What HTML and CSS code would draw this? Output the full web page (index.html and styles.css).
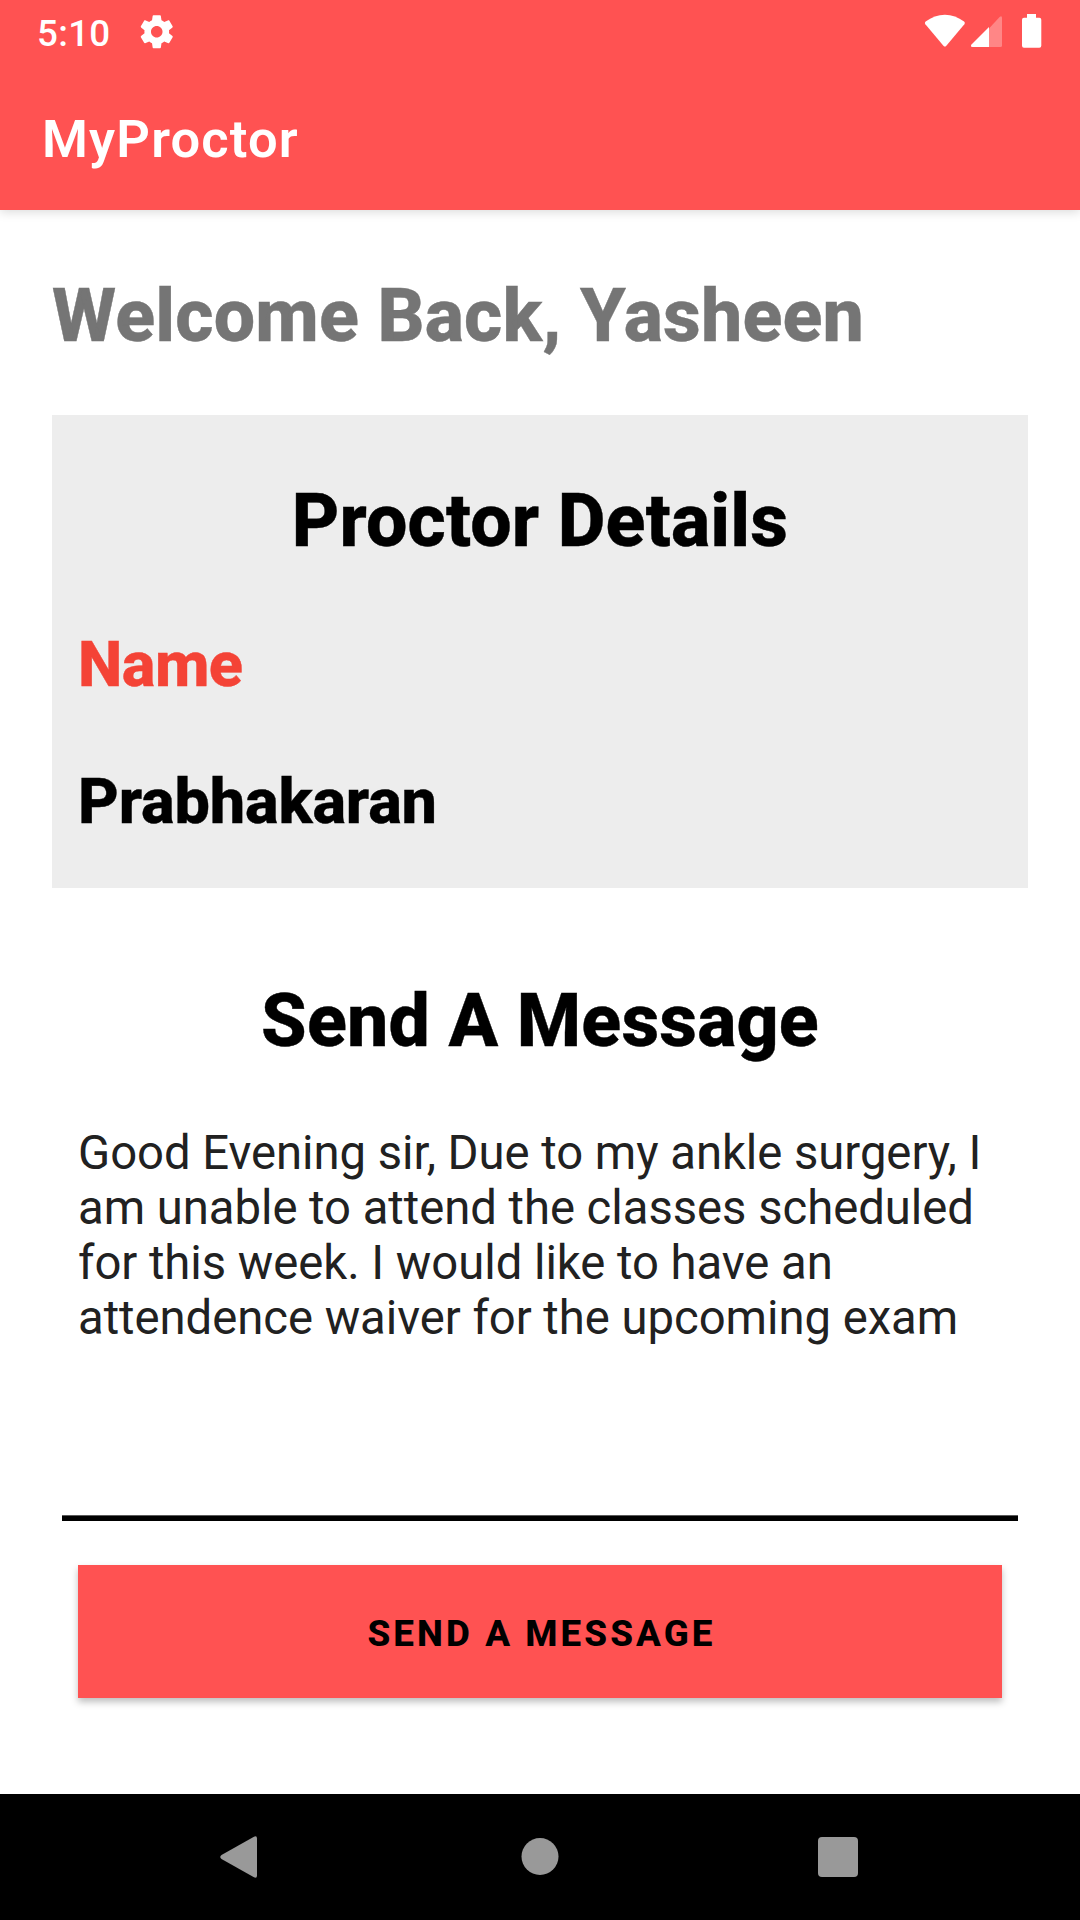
FILE: index.html
```html
<!DOCTYPE html>
<html lang="en">
<head>
<meta charset="utf-8">
<title>MyProctor</title>
<link rel="stylesheet" href="styles.css">
</head>
<body>
<div class="screen">
  <header class="top">
    <div class="status">
      <span class="clock">5:10</span>
      <svg class="gear" viewBox="0 0 24 24"><path d="M19.43 12.98c.04-.32.07-.64.07-.98s-.03-.66-.07-.98l2.11-1.65c.19-.15.24-.42.12-.64l-2-3.46c-.12-.22-.39-.3-.61-.22l-2.49 1c-.52-.4-1.08-.73-1.69-.98l-.38-2.65C14.46 2.18 14.25 2 14 2h-4c-.25 0-.46.18-.49.42l-.38 2.65c-.61.25-1.17.59-1.69.98l-2.49-1c-.23-.09-.49 0-.61.22l-2 3.46c-.13.22-.07.49.12.64l2.11 1.65c-.04.32-.07.65-.07.98s.03.66.07.98l-2.11 1.65c-.19.15-.24.42-.12.64l2 3.46c.12.22.39.3.61.22l2.49-1c.52.4 1.08.73 1.69.98l.38 2.65c.03.24.24.42.49.42h4c.25 0 .46-.18.49-.42l.38-2.65c.61-.25 1.17-.59 1.69-.98l2.49 1c.23.09.49 0 .61-.22l2-3.46c.12-.22.07-.49-.12-.64l-2.11-1.65zM12 15.5c-1.93 0-3.5-1.57-3.5-3.5s1.57-3.5 3.5-3.5 3.5 1.57 3.5 3.5-1.57 3.5-3.5 3.5z"/></svg>
      <svg class="indicators" viewBox="0 0 120 36">
        <path d="M0.9 10.2Q-0.2 8.8 1.2 7.6C13-1.6 29-1.6 40.800 7.6Q42.200 8.800 41.100 10.200L22.300 32Q21 33.200 19.700 32Z" transform="translate(.5 0) scale(.97 1)"/>
        <path class="dim" d="M65 14.500L75.600 2.900Q78 1 78 4V31.500Q78 33 76.500 33H65Z"/>
        <path d="M65 13V33H48.500Q46 33 47.500 30.500Z"/>
        <path d="M103 0h9v3.700h3.300q2 0 2 2V31.700q0 2-2 2H100q-2 0-2-2V5.700q0-2 2-2h3Z"/>
      </svg>
    </div>
    <h1 class="title">MyProctor</h1>
  </header>
  <main class="content">
    <h2 class="heading welcome">Welcome Back, Yasheen</h2>
    <section class="card">
      <h2 class="heading centered">Proctor Details</h2>
      <div class="detail label">Name</div>
      <div class="detail">Prabhakaran</div>
    </section>
    <h2 class="heading centered compose">Send A Message</h2>
    <div class="message">Good Evening sir, Due to my ankle surgery, I<br>am unable to attend the classes scheduled<br>for this week. I would like to have an<br>attendence waiver for the upcoming exam</div>
    <button class="send" type="button">SEND A MESSAGE</button>
  </main>
  <nav class="nav">
    <svg viewBox="0 0 44 44"><path d="M36.500 1.900Q40 0 40 3.500V40.500Q40 44 36.500 42.100L4.500 24Q2 22 4.500 20Z"/></svg>
    <svg viewBox="0 0 44 44"><circle cx="23" cy="21.500" r="18.500"/></svg>
    <svg viewBox="0 0 44 44"><rect x="2" y="2" width="40" height="40" rx="4"/></svg>
  </nav>
</div>
</body>
</html>
```
FILE: styles.css
```css
* { box-sizing: border-box; }
body { margin: 0; font-family: Roboto, sans-serif; background: #fff; }
.screen { width: 1080px; height: 1920px; display: flex; flex-direction: column; overflow: hidden; }

.top { height: 210px; flex: none; background: #ff5252; color: #fff; box-shadow: 0 2px 10px rgba(0, 0, 0, .15); }
.status { height: 63px; display: flex; align-items: flex-start; padding: 0 36px 0 37px; }
.clock { font-size: 36.75px; font-weight: 500; line-height: 43px; margin-top: 12px; width: 100px; letter-spacing: .3px; }
.gear { width: 39.5px; height: 39.5px; margin-top: 12px; fill: #fff; }
.indicators { width: 120px; height: 36px; margin: 14px 0 0 auto; fill: #fff; }
.dim { opacity: .3; }
.title { margin: 0; padding: 45px 42px 0; font-size: 52.5px; font-weight: 580; line-height: 62px; letter-spacing: 1.15px; }

.content { flex: 1; padding: 63px 52px 0; display: flex; flex-direction: column; }
.heading { margin: 0; font-size: 73.5px; font-weight: 850; line-height: 86px; letter-spacing: .17px; color: #000; white-space: nowrap; -webkit-text-stroke: .4px currentColor; }
.welcome { color: #757575; }
.centered { text-align: center; }
.card { margin-top: 56px; height: 473px; padding: 63px 26px 0; background: #ededed; }
.detail { margin-top: 63px; font-size: 63px; font-weight: 850; line-height: 76px; height: 74px; letter-spacing: -.15px; color: #000; -webkit-text-stroke: .4px currentColor; }
.detail.label { color: #f44336; letter-spacing: -.5px; }
.compose { margin-top: 90px; }
.message { margin: 61px 10px 0; height: 396px; padding: 1px 0 0 16px; border-bottom: 5px solid #000; box-shadow: inset 0 -1px #5a5a5a; font-size: 47.25px; line-height: 55px; letter-spacing: -.04px; color: #212121; white-space: nowrap; }
.send { margin: 44px 26px 0; height: 133px; border: 0; padding: 3px 0 0 3px; background: #ff5252; color: #000; font-family: inherit; font-size: 36.75px; font-weight: 850; letter-spacing: 3.08px; box-shadow: 0 4px 7px rgba(0, 0, 0, .26); }

.nav { height: 126px; flex: none; background: #000; display: flex; justify-content: space-between; align-items: flex-start; padding: 41px 220px 0 217px; }
.nav svg { width: 44px; height: 44px; fill: #999; }
```
